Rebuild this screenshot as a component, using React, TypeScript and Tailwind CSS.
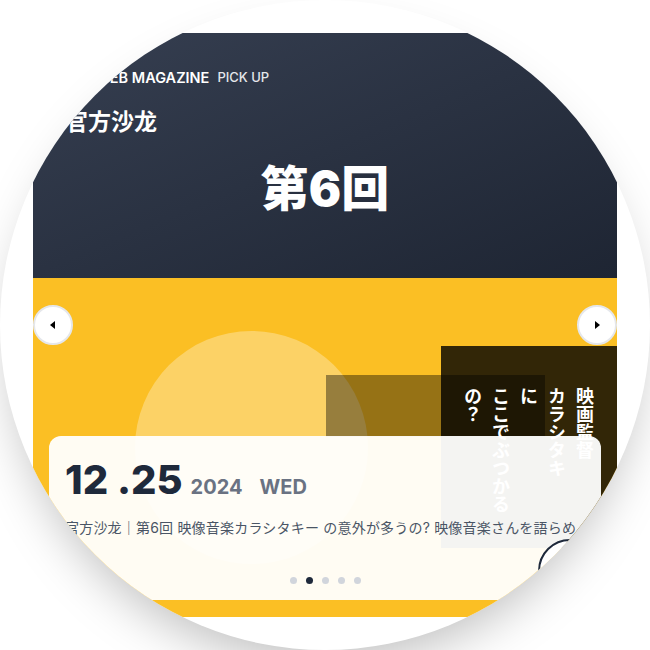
export default function App() {
  return (
    <div className="w-[650px] h-[650px] bg-white">
      <div className="w-[650px] h-[650px] rounded-full bg-white overflow-hidden p-[33px] shadow-[0_25px_50px_-12px_rgba(0,0,0,0.25)] font-['Inter','Noto_Sans_CJK_JP',sans-serif]">
        <div className="w-full h-full flex flex-col">
          <Header />
          <Feature />
        </div>
      </div>
    </div>
  );
}

function Header() {
  return (
    <div className="h-[245px] shrink-0 bg-linear-to-br from-[#363f51] to-[#1e2533] px-8 pt-[35px] text-white">
      <div className="flex items-center h-5">
        <span className="w-[22px] h-[22px] rounded-md bg-white/90 mr-2" />
        <span className="text-[14.5px] font-semibold">WEB MAGAZINE</span>
        <span className="ml-2 text-[13px] font-medium text-gray-200">PICK UP</span>
      </div>
      <h2 className="mt-5 text-[23px] leading-[28px] font-bold">官方沙龙</h2>
      <div className="mt-[29px] text-center text-[48px] leading-none font-black">第6回</div>
    </div>
  );
}

function Arrow({ side }: { side: "left" | "right" }) {
  return (
    <button
      className={
        side === "left"
          ? "absolute left-0 top-[27px] w-10 h-10 rounded-full bg-white border-2 border-gray-200 flex items-center justify-center"
          : "absolute right-0 top-[27px] w-10 h-10 rounded-full bg-white border-2 border-gray-200 flex items-center justify-center"
      }
    >
      <svg width="6" height="8" viewBox="0 0 6 8">
        <path d={side === "left" ? "M5 0L0 4l5 4z" : "M1 0l5 4-5 4z"} fill="#000" />
      </svg>
    </button>
  );
}

function Feature() {
  const dots = [false, true, false, false, false];
  return (
    <div className="relative flex-1 bg-[#fbbf24] flex flex-col justify-end px-4 pb-[17px]">
      {/* background art */}
      <div className="absolute left-[102px] top-[53px] w-[233px] h-[233px] rounded-full bg-white/30" />
      <div className="absolute left-[293px] top-[97px] w-[219px] h-[62px] bg-black/40" />
      <div className="absolute right-0 top-[68px] w-[176px] h-[202px] bg-black/80 pt-[41px] pr-[18px] flex justify-end">
        <p className="[writing-mode:vertical-rl] text-[18px] leading-[28px] font-bold text-white font-['Noto_Sans_CJK_JP',sans-serif]">
          映画監督<br />カラシタキ<br />に<br />ここでぶつかる<br />の？
        </p>
      </div>
      <Arrow side="left" />
      <Arrow side="right" />

      <div className="relative z-10 h-[164px] rounded-xl bg-white/95 px-4 pt-6">
        <div className="flex items-baseline">
          <span className="text-[40px] leading-none font-extrabold text-[#1e293b]">12 .25</span>
          <span className="ml-2 text-[20px] font-bold text-gray-500">2024</span>
          <span className="ml-[17px] text-[20px] font-bold text-gray-500">WED</span>
        </div>
        <p className="mt-4 h-10 overflow-hidden text-[14px] leading-5 tracking-[0.2px] text-gray-600">
          官方沙龙｜第6回 映像音楽カラシタキー の意外が多うの? 映像音楽さんを語らめて
        </p>
        <div className="mt-[19px] flex justify-center gap-[9px]">
          {dots.map((on, i) => (
            <span key={i} className={on ? "w-[7px] h-[7px] rounded-full bg-[#1e293b]" : "w-[7px] h-[7px] rounded-full bg-gray-300"} />
          ))}
        </div>
        <div className="absolute left-[489px] top-[103px] w-16 h-16 rounded-full border-2 border-[#1e293b] bg-white" />
      </div>
    </div>
  );
}
